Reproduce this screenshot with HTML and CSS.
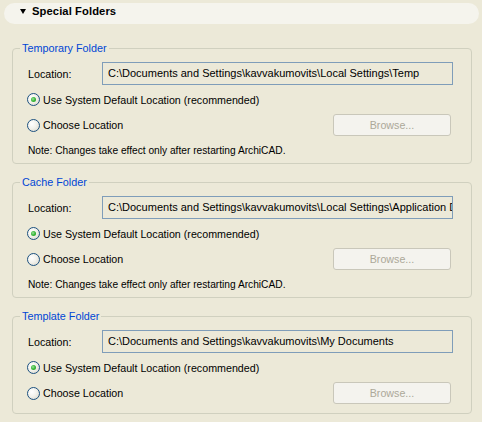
FILE: index.html
```html
<!DOCTYPE html>
<html>
<head>
<meta charset="utf-8">
<link rel="stylesheet" href="styles.css">
</head>
<body>
<div class="header">
  <span class="tri"></span>
  <span class="title">Special Folders</span>
</div>
<div class="panel">
  <fieldset class="group">
    <legend>Temporary Folder</legend>
    <div class="loc-row">
      <span class="loc-label">Location:</span>
      <div class="loc-field">C:\Documents and Settings\kavvakumovits\Local Settings\Temp</div>
    </div>
    <div class="radio-row">
      <span class="radio checked"></span>
      <span class="radio-label">Use System Default Location (recommended)</span>
    </div>
    <div class="radio-row choose">
      <span class="radio"></span>
      <span class="radio-label">Choose Location</span>
      <span class="browse">Browse...</span>
    </div>
    <div class="note">Note: Changes take effect only after restarting ArchiCAD.</div>
  </fieldset>
  <fieldset class="group">
    <legend>Cache Folder</legend>
    <div class="loc-row">
      <span class="loc-label">Location:</span>
      <div class="loc-field">C:\Documents and Settings\kavvakumovits\Local Settings\Application Data</div>
    </div>
    <div class="radio-row">
      <span class="radio checked"></span>
      <span class="radio-label">Use System Default Location (recommended)</span>
    </div>
    <div class="radio-row choose">
      <span class="radio"></span>
      <span class="radio-label">Choose Location</span>
      <span class="browse">Browse...</span>
    </div>
    <div class="note">Note: Changes take effect only after restarting ArchiCAD.</div>
  </fieldset>
  <fieldset class="group last">
    <legend>Template Folder</legend>
    <div class="loc-row">
      <span class="loc-label">Location:</span>
      <div class="loc-field">C:\Documents and Settings\kavvakumovits\My Documents</div>
    </div>
    <div class="radio-row">
      <span class="radio checked"></span>
      <span class="radio-label">Use System Default Location (recommended)</span>
    </div>
    <div class="radio-row choose">
      <span class="radio"></span>
      <span class="radio-label">Choose Location</span>
      <span class="browse">Browse...</span>
    </div>
  </fieldset>
</div>
</body>
</html>
```
FILE: styles.css
```css
html, body {
  margin: 0;
  padding: 0;
  background: #ece9d8;
  font-family: "Liberation Sans", Arial, sans-serif;
  font-size: 10.7px;
  color: #000;
  overflow: hidden;
}

.header {
  margin: 3px 3px 0 4px;
  height: 21px;
  border-radius: 11px;
  background: #f5f4ed;
  display: flex;
  align-items: center;
  padding-left: 16px;
}

.tri {
  width: 0;
  height: 0;
  border-left: 3.5px solid transparent;
  border-right: 3.5px solid transparent;
  border-top: 5px solid #000;
  margin-right: 6px;
  margin-top: -4px;
}

.title {
  font-weight: bold;
  font-size: 11.2px;
  margin-top: -5px;
  letter-spacing: 0.1px;
}

.panel {
  padding: 18px 10px 0 12px;
  display: flex;
  flex-direction: column;
  gap: 12px;
}

.group {
  margin: 0;
  border: 1px solid #d0d0bf;
  border-radius: 4px;
  padding: 7px 20px 6px 15px;
  display: flex;
  flex-direction: column;
  gap: 8px;
  min-width: 0;
}

.group.last {
  padding-bottom: 9px;
}

legend {
  color: #0046d5;
  padding: 0 2px;
  margin-left: -8px;
  line-height: 13px;
  font-size: 10.8px;
}

.loc-row {
  display: flex;
  align-items: center;
  height: 23px;
}

.loc-label {
  width: 74px;
  flex: none;
}

.loc-field {
  box-sizing: border-box;
  width: 351px;
  height: 23px;
  border: 1px solid #7f9db9;
  padding-left: 5px;
  line-height: 21px;
  font-size: 11px;
  white-space: nowrap;
  overflow: hidden;
  flex: none;
}

.radio-row {
  display: flex;
  align-items: center;
  height: 13px;
  margin-left: -1px;
}

.radio-row.choose {
  height: 22px;
}

.radio {
  width: 11px;
  height: 11px;
  border: 1px solid #1c5180;
  border-radius: 50%;
  background: radial-gradient(circle at 35% 35%, #ffffff 0%, #f3f2ec 45%, #d6d3c6 100%);
  flex: none;
  position: relative;
  margin-right: 3px;
}

.radio.checked::after {
  content: "";
  position: absolute;
  left: 3px;
  top: 3px;
  width: 5px;
  height: 5px;
  border-radius: 50%;
  background: radial-gradient(circle at 40% 40%, #9de29d 0%, #37b637 50%, #1f9b1f 100%);
}

.radio-label {
  white-space: nowrap;
}

.browse {
  box-sizing: border-box;
  margin-left: auto;
  width: 118px;
  height: 22px;
  border: 1px solid #c9c7ba;
  border-radius: 3px;
  background: #f4f3ee;
  color: #aca899;
  display: flex;
  align-items: center;
  justify-content: center;
  flex: none;
}

.note {
  line-height: 13px;
  font-size: 10.2px;
}
```
